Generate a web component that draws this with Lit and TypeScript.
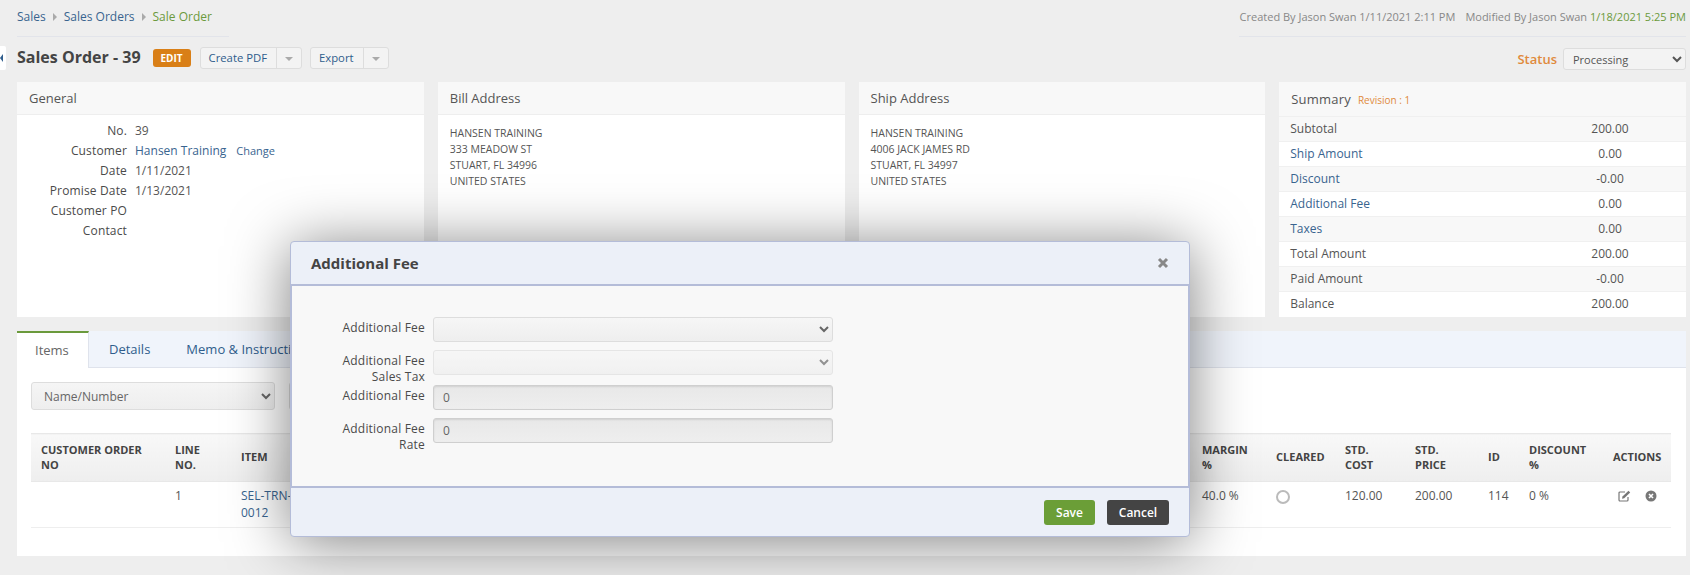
import { LitElement, html, css } from "lit";
import { customElement } from "lit/decorators.js";

const general: [string, string][] = [
  ["No.", "39"],
  ["Customer", ""],
  ["Date", "1/11/2021"],
  ["Promise Date", "1/13/2021"],
  ["Customer PO", ""],
  ["Contact", ""],
];

const summary: { label: string; value: string; link?: boolean }[] = [
  { label: "Subtotal", value: "200.00" },
  { label: "Ship Amount", value: "0.00", link: true },
  { label: "Discount", value: "-0.00", link: true },
  { label: "Additional Fee", value: "0.00", link: true },
  { label: "Taxes", value: "0.00", link: true },
  { label: "Total Amount", value: "200.00" },
  { label: "Paid Amount", value: "-0.00" },
  { label: "Balance", value: "200.00" },
];

const colWidths = [134, 66, 90, 871, 74, 69, 70, 73, 41, 84, 68];

@customElement("app-root")
export class AppRoot extends LitElement {
  static styles = css`
    :host {
      display: block;
      position: relative;
      height: 575px;
      overflow: hidden;
      background: #eee;
      font-family: "Open Sans", "Noto Sans", sans-serif;
      font-size: 12px;
      color: #555;
    }
    * {
      box-sizing: border-box;
    }
    a {
      color: #39648f;
      text-decoration: none;
    }

    .page {
      padding: 0 4px 0 17px;
    }

    /* top strip */
    .top {
      display: flex;
      justify-content: space-between;
      height: 37px;
    }
    .crumbs {
      display: flex;
      align-items: center;
      gap: 6px;
      width: 212px;
      height: 37px;
      padding-bottom: 3px;
      border-bottom: 1px solid #e2e4ea;
      font-weight: 500;
    }
    .crumbs .current {
      color: #6b9a3c;
    }
    .crumb-arrow {
      width: 0;
      height: 0;
      margin: 0 1px;
      border-left: 4px solid #aaa;
      border-top: 4px solid transparent;
      border-bottom: 4px solid transparent;
    }
    .meta {
      display: flex;
      align-items: center;
      gap: 10px;
      width: 447px;
      height: 37px;
      padding-bottom: 3px;
      justify-content: flex-end;
      border-bottom: 1px solid #e2e4ea;
      font-size: 11px;
      color: #888;
      white-space: nowrap;
    }
    .meta .stamp {
      color: #6b9a3c;
    }

    /* title row */
    .head {
      display: flex;
      justify-content: space-between;
      height: 45px;
      padding-top: 10px;
    }
    .head-left {
      display: flex;
      align-items: center;
      height: 22px;
    }
    h1 {
      margin: -2px 12px 0 0;
      font-size: 16px;
      font-weight: 700;
      color: #444;
    }
    .badge {
      width: 38px;
      height: 18px;
      margin-right: 9px;
      border-radius: 3px;
      background: #d97f17;
      color: #fff;
      font-size: 10px;
      font-weight: 700;
      line-height: 18px;
      text-align: center;
    }
    .btn-group {
      display: flex;
      height: 22px;
      margin-right: 8px;
      border: 1px solid #ddd;
      border-radius: 3px;
      background: #f3f3f3;
      color: #2f5d8c;
      font-size: 11.3px;
      line-height: 19px;
    }
    .btn-group .txt {
      padding: 0 9px 0 8px;
      border-right: 1px solid #ddd;
    }
    .btn-group .drop {
      display: flex;
      align-items: center;
      justify-content: center;
      width: 24px;
    }
    .caret {
      width: 0;
      height: 0;
      margin-top: 2px;
      border-top: 4px solid #aaa;
      border-left: 4px solid transparent;
      border-right: 4px solid transparent;
    }
    .status {
      display: flex;
      align-items: center;
      gap: 6px;
      height: 22px;
      margin-top: 1px;
      color: #e08a3c;
      font-size: 13px;
      font-weight: 600;
    }
    .status select {
      width: 123px;
      height: 22px;
      padding-left: 5px;
      border: 1px solid #ddd;
      border-radius: 3px;
      background: #f3f3f3;
      color: #555;
      font: 400 11px "Open Sans", sans-serif;
    }

    /* collapse handle */
    .handle {
      position: absolute;
      left: 0;
      top: 46px;
      display: flex;
      align-items: center;
      width: 6px;
      height: 24px;
      border-radius: 0 2px 2px 0;
      background: #fff;
    }
    .handle i {
      width: 0;
      height: 0;
      border-right: 3px solid #2f5d8c;
      border-top: 4px solid transparent;
      border-bottom: 4px solid transparent;
    }

    /* info panels */
    .panels {
      display: grid;
      grid-template-columns: repeat(4, 1fr);
      gap: 14px;
      height: 235px;
      margin-bottom: 14px;
    }
    .panel {
      background: #fff;
    }
    .panel-head {
      display: flex;
      align-items: center;
      gap: 7px;
      height: 33px;
      padding-left: 12px;
      border-bottom: 1px solid #eee;
      background: #f8f8f8;
      font-size: 13px;
      font-weight: 500;
      color: #555;
    }
    .general {
      display: grid;
      grid-template-columns: 110px 1fr;
      grid-auto-rows: 20px;
      column-gap: 8px;
      padding-top: 6px;
      line-height: 20px;
    }
    .general .k {
      text-align: right;
      font-weight: 500;
      letter-spacing: 0.15px;
      color: #4a4a4a;
    }
    .general .change {
      margin-left: 10px;
      font-size: 11px;
    }
    .address {
      padding: 10px 12px;
      font-size: 10.5px;
      line-height: 16px;
    }
    .revision {
      color: #e08a3c;
      font-size: 10px;
      font-weight: 500;
      padding-top: 2px;
      letter-spacing: 0;
    }
    .summary-row {
      display: grid;
      grid-template-columns: 1fr 152px;
      align-items: center;
      height: 25px;
      padding: 0 0 2px 11px;
      border-top: 1px solid #f0f0f0;
    }
    .summary-row:nth-child(odd) {
      background: #f8f8f8;
    }
    .summary-row .val {
      text-align: center;
    }
    .panel-head.sum {
      height: 34px;
      border-bottom: 0;
      letter-spacing: 0.2px;
    }

    /* tabbed section */
    .section {
      height: 225px;
      background: #fff;
    }
    .tabs {
      display: flex;
      height: 37px;
      border-bottom: 1px solid #dfe3ec;
      background: #f0f4fb;
      font-size: 13px;
      font-weight: 500;
    }
    .tab {
      padding: 0 20px;
      color: #2f5d8c;
      line-height: 36px;
      white-space: nowrap;
    }
    .tab.active {
      width: 72px;
      height: 37px;
      padding: 0 0 0 18px;
      border-top: 2px solid #6b9a3c;
      border-right: 1px solid #dfe3ec;
      background: #fff;
      color: #666;
      line-height: 34px;
    }
    .tab.memo {
      padding-left: 16px;
    }
    .section-body {
      padding: 14px 15px 0 14px;
    }
    .filters {
      display: flex;
      gap: 14px;
      height: 28px;
      margin-bottom: 23px;
    }
    .filters select,
    .filters input {
      height: 28px;
      border: 1px solid #ddd;
      border-radius: 3px;
      background: linear-gradient(#f5f5f5, #eee);
      color: #666;
      font: 400 12px "Open Sans", sans-serif;
    }
    .filters select {
      width: 244px;
      padding-left: 8px;
    }
    .filters input {
      width: 240px;
    }
    table {
      width: 1640px;
      border-collapse: collapse;
      table-layout: fixed;
    }
    th {
      height: 48px;
      padding: 0 10px 2px;
      border-top: 1px solid #e8e8e8;
      background: linear-gradient(#f8f8f8, #eee);
      color: #444;
      font-size: 11px;
      font-weight: 700;
      line-height: 15px;
      text-align: left;
      text-transform: uppercase;
    }
    td {
      height: 46px;
      padding: 5px 10px;
      border-top: 1px solid #e8e8e8;
      border-bottom: 1px solid #eee;
      line-height: 17px;
      vertical-align: top;
    }
    td.action-cell {
      padding: 5px 0;
    }
    .radio {
      display: block;
      width: 14px;
      height: 14px;
      margin: 3px 0 0;
      border: 2px solid #bbb;
      border-radius: 50%;
    }
    .actions {
      display: flex;
      gap: 14px;
      padding: 3px 0 0 15px;
    }

    /* dialog */
    .modal {
      position: absolute;
      left: 290px;
      top: 241px;
      display: flex;
      flex-direction: column;
      width: 900px;
      height: 296px;
      border: 1px solid #b4bcd8;
      border-radius: 4px;
      background: #ecf0f8;
      box-shadow: 0 5px 60px rgba(0, 0, 0, 0.5);
    }
    .modal-head {
      display: flex;
      align-items: center;
      justify-content: space-between;
      height: 44px;
      padding: 0 20px;
      border-bottom: 2px solid #b4bcd8;
    }
    .modal-head h2 {
      margin: 0;
      color: #444;
      font-size: 15px;
      font-weight: 700;
    }
    .modal-body {
      height: 202px;
      padding-top: 31px;
      border-left: 1px solid #b4bcd8;
      border-right: 1px solid #b4bcd8;
      border-bottom: 2px solid #b4bcd8;
      background: #f8f8f8;
    }
    .row {
      display: grid;
      grid-template-columns: 133px 400px;
      column-gap: 8px;
      height: 25px;
      margin-bottom: 8px;
    }
    .row.tall {
      height: 35px;
      margin-bottom: 0;
    }
    .row label {
      padding: 3px 0 0 30px;
      line-height: 16px;
      text-align: right;
      font-weight: 500;
      letter-spacing: 0.2px;
      color: #4a4a4a;
    }
    .row select,
    .row input {
      height: 25px;
      width: 400px;
      border: 1px solid #ddd;
      border-radius: 3px;
      font: 400 12px "Open Sans", sans-serif;
      color: #666;
    }
    .row select {
      background: linear-gradient(#f6f6f6, #eee);
    }
    .row select:disabled {
      opacity: 0.7;
    }
    .row input {
      padding-left: 9px;
      border-color: #cfcfcf;
      background: linear-gradient(#e8e8e8, #eee);
      box-shadow: inset 0 1px 2px rgba(0, 0, 0, 0.1);
    }
    .modal-foot {
      display: flex;
      justify-content: flex-end;
      gap: 12px;
      padding: 12px 20px 0 0;
    }
    .btn {
      height: 25px;
      border: 0;
      border-radius: 3px;
      color: #fff;
      font: 600 12px "Open Sans", sans-serif;
    }
    .btn.save {
      width: 51px;
      background: #6b9e37;
    }
    .btn.cancel {
      width: 62px;
      background: #444;
    }
  `;

  private renderGeneralValue(key: string, value: string) {
    if (key === "Customer") {
      return html`<span
        ><a href="#">Hansen Training</a><a class="change" href="#">Change</a></span
      >`;
    }
    return html`<span>${value}</span>`;
  }

  render() {
    return html`
      <div class="page">
        <div class="top">
          <div class="crumbs">
            <a href="#">Sales</a><i class="crumb-arrow"></i>
            <a href="#">Sales Orders</a><i class="crumb-arrow"></i>
            <span class="current">Sale Order</span>
          </div>
          <div class="meta">
            <span>Created By Jason Swan 1/11/2021 2:11 PM</span>
            <span>Modified By Jason Swan <span class="stamp">1/18/2021 5:25 PM</span></span>
          </div>
        </div>

        <div class="head">
          <div class="head-left">
            <h1>Sales Order - 39</h1>
            <span class="badge">EDIT</span>
            <div class="btn-group">
              <span class="txt">Create PDF</span><span class="drop"><i class="caret"></i></span>
            </div>
            <div class="btn-group">
              <span class="txt">Export</span><span class="drop"><i class="caret"></i></span>
            </div>
          </div>
          <div class="status">
            Status
            <select><option>Processing</option></select>
          </div>
        </div>

        <div class="panels">
          <div class="panel">
            <div class="panel-head">General</div>
            <div class="general">
              ${general.map(
                ([k, v]) => html`<span class="k">${k}</span>${this.renderGeneralValue(k, v)}`
              )}
            </div>
          </div>
          <div class="panel">
            <div class="panel-head">Bill Address</div>
            <div class="address">
              HANSEN TRAINING<br />333 MEADOW ST<br />STUART, FL 34996<br />UNITED STATES
            </div>
          </div>
          <div class="panel">
            <div class="panel-head">Ship Address</div>
            <div class="address">
              HANSEN TRAINING<br />4006 JACK JAMES RD<br />STUART, FL 34997<br />UNITED STATES
            </div>
          </div>
          <div class="panel">
            <div class="panel-head sum">Summary <span class="revision">Revision : 1</span></div>
            <div>
              ${summary.map(
                (r) => html`<div class="summary-row">
                  ${r.link ? html`<a href="#">${r.label}</a>` : html`<span>${r.label}</span>`}
                  <span class="val">${r.value}</span>
                </div>`
              )}
            </div>
          </div>
        </div>

        <div class="section">
          <div class="tabs">
            <span class="tab active">Items</span>
            <span class="tab">Details</span>
            <span class="tab memo">Memo &amp; Instructions</span>
          </div>
          <div class="section-body">
            <div class="filters">
              <select><option>Name/Number</option></select>
              <input type="text" />
            </div>
            <table>
              <colgroup>
                ${colWidths.map((w) => html`<col style="width:${w}px" />`)}
              </colgroup>
              <thead>
                <tr>
                  <th>Customer Order No</th>
                  <th>Line No.</th>
                  <th>Item</th>
                  <th></th>
                  <th>Margin %</th>
                  <th>Cleared</th>
                  <th>Std. Cost</th>
                  <th>Std. Price</th>
                  <th>ID</th>
                  <th>Discount %</th>
                  <th>Actions</th>
                </tr>
              </thead>
              <tbody>
                <tr>
                  <td></td>
                  <td>1</td>
                  <td><a href="#">SEL-TRN-0012</a></td>
                  <td></td>
                  <td>40.0 %</td>
                  <td><span class="radio"></span></td>
                  <td>120.00</td>
                  <td>200.00</td>
                  <td>114</td>
                  <td>0 %</td>
                  <td class="action-cell">
                    <div class="actions">
                      <svg width="13" height="12" viewBox="0 0 13 12" fill="none">
                        <path d="M10 7v3a1 1 0 0 1-1 1H2a1 1 0 0 1-1-1V3a1 1 0 0 1 1-1h5" stroke="#777" stroke-width="1.2" />
                        <path d="M4.5 6.5 10.5 .8l1.7 1.7L6.2 8.3l-2.2.4z" fill="#777" />
                      </svg>
                      <svg width="12" height="12" viewBox="0 0 12 12">
                        <circle cx="6" cy="6" r="5.5" fill="#777" />
                        <path d="M4 4l4 4M8 4l-4 4" stroke="#fff" stroke-width="1.6" />
                      </svg>
                    </div>
                  </td>
                </tr>
              </tbody>
            </table>
          </div>
        </div>
      </div>

      <div class="handle"><i></i></div>

      <div class="modal">
        <div class="modal-head">
          <h2>Additional Fee</h2>
          <svg width="12" height="12" viewBox="0 0 12 12">
            <path d="M2 2l8 8M10 2l-8 8" stroke="#888" stroke-width="3" />
          </svg>
        </div>
        <div class="modal-body">
          <div class="row">
            <label>Additional Fee</label>
            <select><option></option></select>
          </div>
          <div class="row tall">
            <label>Additional Fee Sales Tax</label>
            <select disabled><option></option></select>
          </div>
          <div class="row">
            <label>Additional Fee</label>
            <input type="text" value="0" />
          </div>
          <div class="row">
            <label>Additional Fee Rate</label>
            <input type="text" value="0" />
          </div>
        </div>
        <div class="modal-foot">
          <button class="btn save">Save</button>
          <button class="btn cancel">Cancel</button>
        </div>
      </div>
    `;
  }
}
